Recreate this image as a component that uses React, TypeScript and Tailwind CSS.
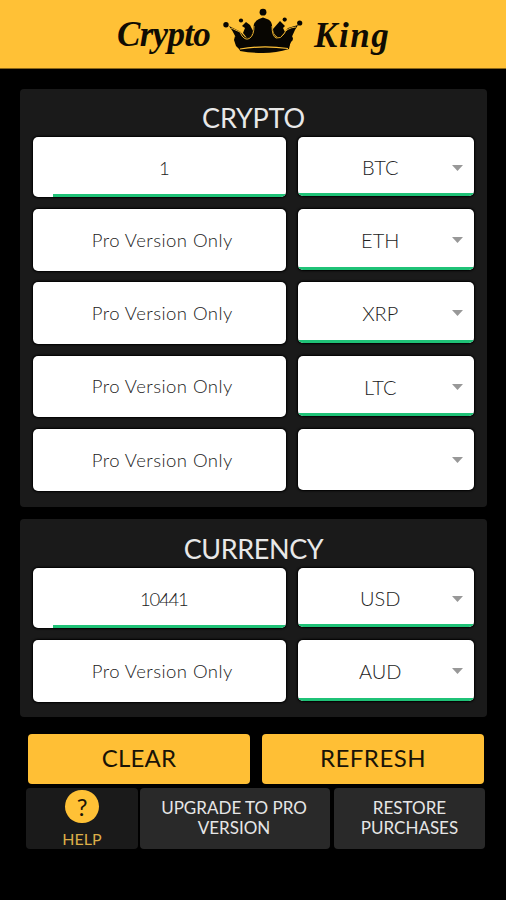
import React from "react";

type Row = { value: string; unit: string; active?: boolean };

const crypto: (Row & { box: string })[] = [
  { value: "1", unit: "BTC", active: true, box: "h-[60px] mb-[12px]" },
  { value: "Pro Version Only", unit: "ETH", box: "h-[62px] mb-[11px]" },
  { value: "Pro Version Only", unit: "XRP", box: "h-[62px] mb-[12px]" },
  { value: "Pro Version Only", unit: "LTC", box: "h-[61px] mb-[12px]" },
  { value: "Pro Version Only", unit: "", box: "h-[62px]" },
];

const currency: (Row & { box: string })[] = [
  { value: "10441", unit: "USD", active: true, box: "h-[60px] mb-[12px]" },
  { value: "Pro Version Only", unit: "AUD", box: "h-[62px]" },
];

function Field({ value, unit, active, box }: Row & { box: string }) {
  const spacing = active ? "pl-[9px] pt-[2px] tracking-[-1.2px]" : "pl-[6px] tracking-[0.45px]";
  return (
    <div className={`flex gap-[12px] ${box}`}>
      <div className="relative flex w-[252.5px] items-center justify-center overflow-hidden rounded-[5px] bg-white shadow-[0_0_2px_1px_#000]">
        <span className={`text-[18.5px] font-light leading-none text-[#222] ${spacing}`}>{value}</span>
        {active && <div className="absolute bottom-0 left-[20px] right-0 h-[3px] bg-[#1fc277]" />}
      </div>
      <div className="relative mb-px flex w-[176.5px] items-center justify-center overflow-hidden rounded-[5px] bg-white pr-[11px] shadow-[0_0_2px_1px_#000]">
        <span className="pt-px text-[20px] font-light leading-none text-[#222]">{unit}</span>
        <div className="absolute right-[11px] top-[28px] h-[6px] w-[11px] bg-[#989898] [clip-path:polygon(0_0,100%_0,50%_100%)]" />
        {unit && <div className="absolute bottom-0 left-0 right-0 h-[3px] bg-[#1fc277]" />}
      </div>
    </div>
  );
}

function Crown() {
  return (
    <svg className="mt-[7px] h-[48px] w-[82px] shrink-0" viewBox="222 7 82 48">
      <g fill="#080602">
        <circle cx="263" cy="12.2" r="3.4" />
        <circle cx="226" cy="24.7" r="2.7" />
        <circle cx="299.7" cy="23" r="2.6" />
        <circle cx="241" cy="20.5" r="2.1" />
        <circle cx="284.7" cy="19.6" r="2.1" />
        <path d="M229 26 L240 31.500 L245 37 Q249 39 252 34 L254 24 Q256 20 259 19 L263 17.500 L267 19 Q271 20 272 25 Q272 33 276 37 Q280 38 284 33 L288 28 L298 25 Q291 35 289 49 Q276 53 263 53 Q251 53 240 51 Q237 36 229 26Z" />
        <path d="M246 22 L250 25 L253 31 Q252 37 247 38 L243 33 L245 28 L242 26Z" />
        <path d="M280 21 L285 26 L283 28 L285 32 L279 38 Q273 35 273 29Z" />
        <path d="M235 36 L239 40 L240 50 L236 46 L234 40ZM291 35 Q295 39 291 42 L288 49Z" />
      </g>
      <path d="M240 49 Q263 45 288 48.500" fill="none" stroke="#ffc136" strokeWidth="1.200" />
      <path d="M231 28 L240 32 L242 36 Q246 41 250 38 Q254 35 254 26 M272 26 Q272 36 276 38 Q281 39 284 34 Q286 28 296 27" fill="none" stroke="#e5ad2d" strokeWidth="1" />
    </svg>
  );
}

export default function App() {
  return (
    <div className="flex h-[900px] w-[506px] flex-col overflow-hidden bg-black font-['Lato',sans-serif]">
      <header className="flex h-[69px] shrink-0 border-b border-[#8b6718] bg-[#ffc136] pl-[117px] font-['Liberation_Serif',serif] font-bold italic text-[#100c03]">
        <span className="mt-[15px] w-[105px] shrink-0 text-[35px] leading-[40px] tracking-[-0.7px]">Crypto</span>
        <Crown />
        <span className="ml-[10px] mt-[16px] w-[86px] text-[35px] leading-[40px] tracking-[1.6px]">King</span>
      </header>

      <section className="ml-[20px] mt-[20px] h-[418px] w-[467px] shrink-0 rounded-[4px] bg-[#1a1a1a] pl-[13px]">
        <h2 className="h-[48px] pr-[13px] pt-[13px] text-center text-[27px] font-normal leading-[32px] tracking-[-0.2px] text-[#e8e8e8]">CRYPTO</h2>
        {crypto.map((r, i) => <Field key={i} {...r} />)}
      </section>

      <section className="ml-[20px] mt-[12px] h-[198px] w-[467px] shrink-0 rounded-[4px] bg-[#1a1a1a] pl-[13px]">
        <h2 className="h-[49px] pr-[13px] pt-[14px] text-center text-[27px] font-normal leading-[32px] tracking-[-0.4px] text-[#e8e8e8]">CURRENCY</h2>
        {currency.map((r, i) => <Field key={i} {...r} />)}
      </section>

      <div className="ml-[28px] mt-[17px] flex h-[50px] shrink-0 gap-[12px] text-[24px] text-[#191307]">
        <button className="w-[222px] rounded-[4px] bg-[#ffbf35] pb-[3px] tracking-[0.2px]">CLEAR</button>
        <button className="w-[222px] rounded-[4px] bg-[#ffbf35] pb-[3px] tracking-[0.5px]">REFRESH</button>
      </div>

      <div className="ml-[26px] mt-[4px] flex h-[61px] shrink-0 text-[17px] leading-[20px] text-[#e6e6e6]">
        <button className="flex w-[112px] flex-col items-center rounded-[4px] bg-[#1a1a1a] pt-[2px]">
          <span className="flex h-[34px] w-[34px] items-center justify-center rounded-full bg-[#ffc136] text-[24px] font-normal text-[#191307]">?</span>
          <span className="mt-[6px] text-[16px] text-[#dcae48]">HELP</span>
        </button>
        <button className="ml-[2px] w-[190px] rounded-[4px] bg-[#292929] pb-[2px] pr-[2px]">UPGRADE TO PRO<br />VERSION</button>
        <button className="ml-[4px] w-[151px] rounded-[4px] bg-[#292929] pb-[2px]">RESTORE<br />PURCHASES</button>
      </div>
    </div>
  );
}
